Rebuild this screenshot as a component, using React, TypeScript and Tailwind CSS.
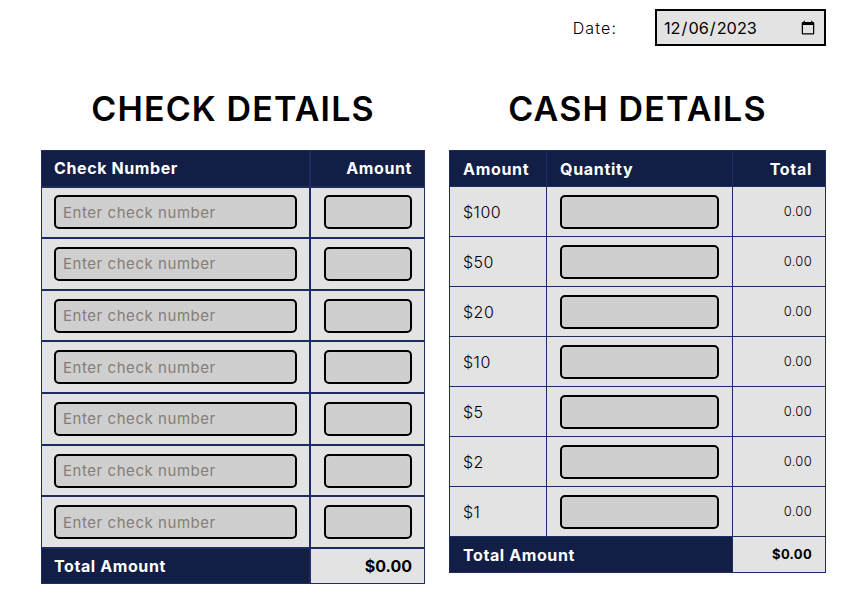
const font = "font-['Inter','Liberation_Sans',sans-serif]";

const checkRows = Array(7).fill(null);
const cashRows = ["$100", "$50", "$20", "$10", "$5", "$2", "$1"];

function Input({ className, placeholder }: { className: string; placeholder?: string }) {
  return (
    <input
      type="text"
      placeholder={placeholder}
      className={`block h-[34px] rounded-[5px] border-2 border-black bg-[#cfcfcf] px-[7px] text-[15px] tracking-[0.55px] outline-none placeholder:text-[#857d76] ${className}`}
    />
  );
}

function CheckDetails() {
  return (
    <div className="w-[384px]">
      <h2 className="text-center text-[34px] leading-[42px] font-semibold tracking-[1.15px] text-black">CHECK DETAILS</h2>
      <table className="mt-[20px] w-full table-fixed border-collapse">
        <thead>
          <tr className="h-[36px] bg-[#121e45] text-[16px] tracking-[0.6px] text-white">
            <th className="w-[268px] border-2 border-t border-l border-[#1f2b63] pl-[12px] text-left font-bold">Check Number</th>
            <th className="border-2 border-t border-r border-[#1f2b63] pr-[12px] text-right font-bold">Amount</th>
          </tr>
        </thead>
        <tbody>
          {checkRows.map((_, index) => (
            <tr key={`check-${index}`} className="h-[51.65px] bg-[#e3e3e3]">
              <td className="border-2 border-l border-[#1f2b63] pl-[12px]">
                <Input className="w-[243px]" placeholder="Enter check number" />
              </td>
              <td className="border-2 border-r border-[#1f2b63] pl-[13px]">
                <Input className="w-[88px]" />
              </td>
            </tr>
          ))}
          <tr className="h-[36px] text-[16px] font-bold">
            <td className="border-2 border-b border-l border-[#1f2b63] bg-[#121e45] pl-[12px] tracking-[0.6px] text-white">Total Amount</td>
            <td className="border-2 border-r border-b border-[#1f2b63] bg-[#e3e3e3] pr-[12px] text-right text-black">$0.00</td>
          </tr>
        </tbody>
      </table>
    </div>
  );
}

function CashDetails() {
  return (
    <div className="w-[377px]">
      <h2 className="text-center text-[34px] leading-[42px] font-semibold tracking-[1.15px] text-black">CASH DETAILS</h2>
      <table className="mt-[20px] w-full table-fixed border-collapse">
        <thead>
          <tr className="h-[36px] bg-[#121e45] text-[16px] tracking-[0.7px] text-white">
            <th className="w-[97px] border border-[#1f2b63] pl-[13px] text-left font-bold">Amount</th>
            <th className="w-[186px] border border-[#1f2b63] pl-[13px] text-left font-bold">Quantity</th>
            <th className="border border-[#1f2b63] pr-[13px] text-right font-bold">Total</th>
          </tr>
        </thead>
        <tbody>
          {cashRows.map((amount) => (
            <tr key={amount} className="h-[50px] bg-[#e3e3e3] text-black">
              <td className="border border-[#1f2b63] pl-[13px] text-[16px] font-light tracking-[0.5px]">{amount}</td>
              <td className="border border-[#1f2b63] pl-[13px]">
                <Input className="w-[159px]" />
              </td>
              <td className="border border-[#1f2b63] pr-[13px] text-right text-[13px] font-light tracking-[0.3px]">0.00</td>
            </tr>
          ))}
          <tr className="h-[36px] font-bold">
            <td colSpan={2} className="border border-[#1f2b63] bg-[#121e45] pl-[13px] text-[16px] tracking-[0.6px] text-white">Total Amount</td>
            <td className="border border-[#1f2b63] bg-[#e3e3e3] pr-[13px] text-right text-[13px] tracking-[0.3px] text-black">$0.00</td>
          </tr>
        </tbody>
      </table>
    </div>
  );
}

export default function App() {
  return (
    <div className={`h-[594px] w-[860px] overflow-hidden bg-white ${font}`}>
      <div className="flex h-[46px] items-end justify-end pr-[34px]">
        <label className="mr-[38px] mb-[6px] text-[16px] font-light tracking-[1.1px] text-black">Date:</label>
        <input
          type="date"
          defaultValue="2023-12-06"
          className="h-[37px] w-[171px] border-2 border-black bg-[#e3e3e3] px-[6px] pt-[1px] text-[16.3px] text-black outline-none"
        />
      </div>
      <div className="mt-[42px] flex gap-[24px] pl-[41px]">
        <CheckDetails />
        <CashDetails />
      </div>
    </div>
  );
}
